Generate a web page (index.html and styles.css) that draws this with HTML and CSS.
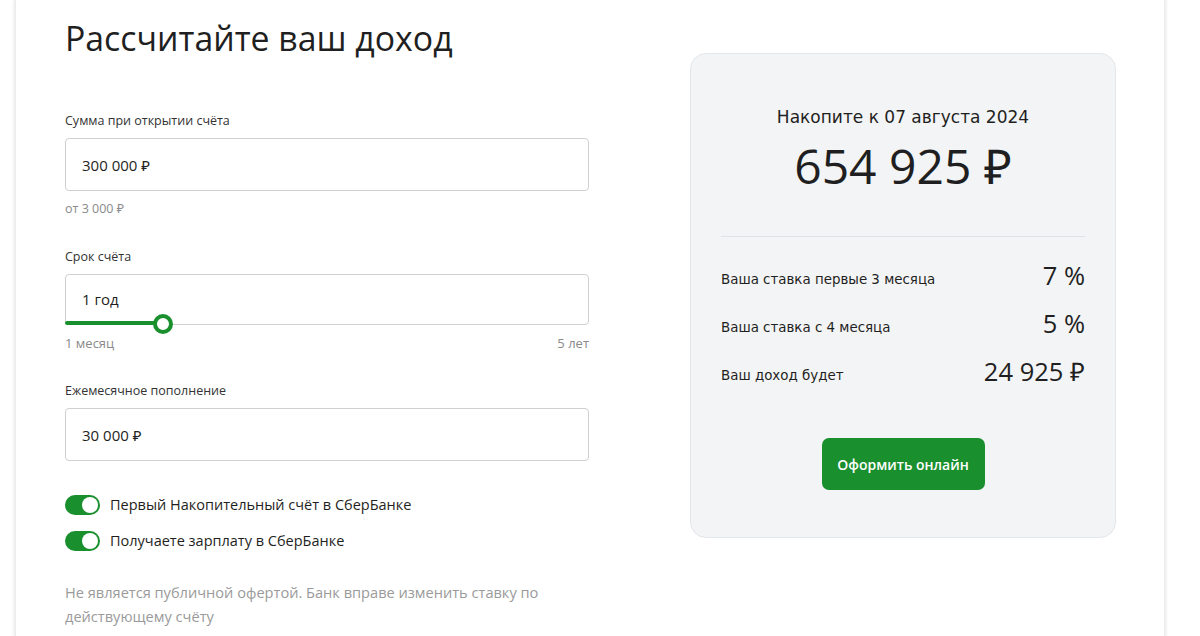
FILE: index.html
```html
<!DOCTYPE html>
<html lang="ru">
<head>
<meta charset="utf-8">
<title>Рассчитайте ваш доход</title>
<link rel="stylesheet" href="styles.css">
</head>
<body>
<div class="page">
  <section class="calc">
    <h1 class="title">Рассчитайте ваш доход</h1>

    <div class="field field-sum">
      <div class="label">Сумма при открытии счёта</div>
      <div class="input">300 000 ₽</div>
      <div class="hint">от 3 000 ₽</div>
    </div>

    <div class="field field-term">
      <div class="label">Срок счёта</div>
      <div class="input input-slider">
        <span>1 год</span>
        <div class="track"><div class="fill" style="width:98px"></div><div class="thumb" style="left:98px"></div></div>
      </div>
      <div class="range"><span>1 месяц</span><span>5 лет</span></div>
    </div>

    <div class="field field-monthly">
      <div class="label">Ежемесячное пополнение</div>
      <div class="input">30 000 ₽</div>
    </div>

    <div class="toggles">
      <div class="toggle-row"><span class="toggle"><span class="knob"></span></span><span>Первый Накопительный счёт в СберБанке</span></div>
      <div class="toggle-row"><span class="toggle"><span class="knob"></span></span><span>Получаете зарплату в СберБанке</span></div>
    </div>

    <p class="disclaimer">Не является публичной офертой. Банк вправе изменить ставку по действующему счёту</p>
  </section>

  <aside class="result">
    <div class="res-date">Накопите к 07 августа 2024</div>
    <div class="res-sum">654 925 ₽</div>
    <div class="divider"></div>
    <div class="row"><span class="row-label">Ваша ставка первые 3 месяца</span><span class="row-value">7 %</span></div>
    <div class="row"><span class="row-label">Ваша ставка с 4 месяца</span><span class="row-value">5 %</span></div>
    <div class="row"><span class="row-label">Ваш доход будет</span><span class="row-value">24 925 ₽</span></div>
    <div class="btn-wrap"><button class="btn">Оформить онлайн</button></div>
  </aside>
</div>
</body>
</html>
```

FILE: styles.css
```css
* { box-sizing: border-box; }
html, body { margin: 0; padding: 0; background: #fff; }
body { font-family: "Open Sans", "Noto Sans", sans-serif; color: #1f1f22; }

.page {
  margin: 0 35px 0 15px;
  width: 1150px;
  min-height: 636px;
  background: #fff;
  box-shadow: -2px 0 2px rgba(0,0,0,0.06), 2px 0 2px rgba(0,0,0,0.06);
  border-left: 1px solid #ececec;
  border-right: 1px solid #ececec;
  padding: 0 0 0 49px;
  display: flex;
  gap: 101px;
  align-items: flex-start;
}

.calc { width: 524px; }

.title {
  margin: 14px 0 0;
  font-weight: 400;
  font-size: 33.8px;
  line-height: 48px;
  color: #1f1f22;
}

.label {
  font-size: 12.5px;
  line-height: 18px;
  color: #333;
  margin-bottom: 8px;
}
.field-sum .label { margin-top: 50px; }
.field-term .label { margin-top: 31px; }
.field-monthly .label { margin-top: 31px; }

.input {
  height: 53px;
  border: 1px solid #d0d0d0;
  border-radius: 4px;
  padding: 0 16px;
  display: flex;
  align-items: center;
  font-size: 15px;
  color: #1f1f22;
}

.hint {
  font-size: 12.5px;
  line-height: 16px;
  color: #8a8a8a;
  margin-top: 10px;
}

.input-slider {
  position: relative;
  height: 51px;
  align-items: flex-start;
  padding-top: 14px;
}
.track {
  position: absolute;
  left: -1px;
  right: -1px;
  bottom: -1px;
  height: 3px;
}
.fill {
  position: absolute;
  left: 0;
  top: -1px;
  height: 4px;
  background: #1a8f2e;
  border-radius: 2px 0 0 2px;
}
.thumb {
  position: absolute;
  top: -8px;
  margin-left: -10px;
  width: 20px;
  height: 20px;
  border-radius: 50%;
  background: #fff;
  border: 4px solid #1a8f2e;
}

.range {
  display: flex;
  justify-content: space-between;
  font-size: 13px;
  line-height: 16px;
  color: #8a8a8a;
  margin-top: 10px;
}

.toggles { margin-top: 34px; display: flex; flex-direction: column; gap: 16px; }
.toggle-row { display: flex; align-items: center; gap: 10px; font-size: 14.5px; color: #1f1f22; line-height: 20px; }
.toggle {
  width: 35px; height: 20px; border-radius: 10px; background: #1a8f2e;
  display: flex; align-items: center; justify-content: flex-end; padding: 2px;
}
.knob { width: 16px; height: 16px; border-radius: 50%; background: #fff; }

.disclaimer {
  margin: 29px 0 0;
  font-size: 14.6px;
  line-height: 24px;
  color: #9a9a9a;
  width: 490px;
}

.result {
  margin-top: 53px;
  width: 426px;
  background: #f3f4f6;
  border: 1px solid #e3e6ea;
  border-radius: 16px;
  padding: 40px 30px 47px;
  color: #1f1f22;
  font-family: "DejaVu Sans", "Noto Sans", sans-serif;
}
.res-date {
  text-align: center;
  font-size: 17px;
  line-height: 24px;
  margin-top: 11px;
}
.res-sum {
  text-align: center;
  font-size: 48px;
  line-height: 56px;
  margin-top: 9px;
  font-family: "Open Sans", sans-serif;
  color: #1f1f22;
}
.divider { height: 1px; background: #dfe2e6; margin: 42px 0 23px; }
.row { display: flex; justify-content: space-between; align-items: flex-end; height: 30px; margin-bottom: 18px; }
.row-label { font-size: 13.4px; line-height: 20px; }
.row-value { font-size: 25.5px; line-height: 30px; font-family: "Open Sans", sans-serif; }
.btn-wrap { display: flex; justify-content: center; margin-top: 52px; }
.btn {
  width: 163px; height: 52px;
  background: #1a8f2e; color: #fff; border: 0; border-radius: 7px;
  font-family: "Open Sans", sans-serif; font-weight: 600; font-size: 14px;
}
```
